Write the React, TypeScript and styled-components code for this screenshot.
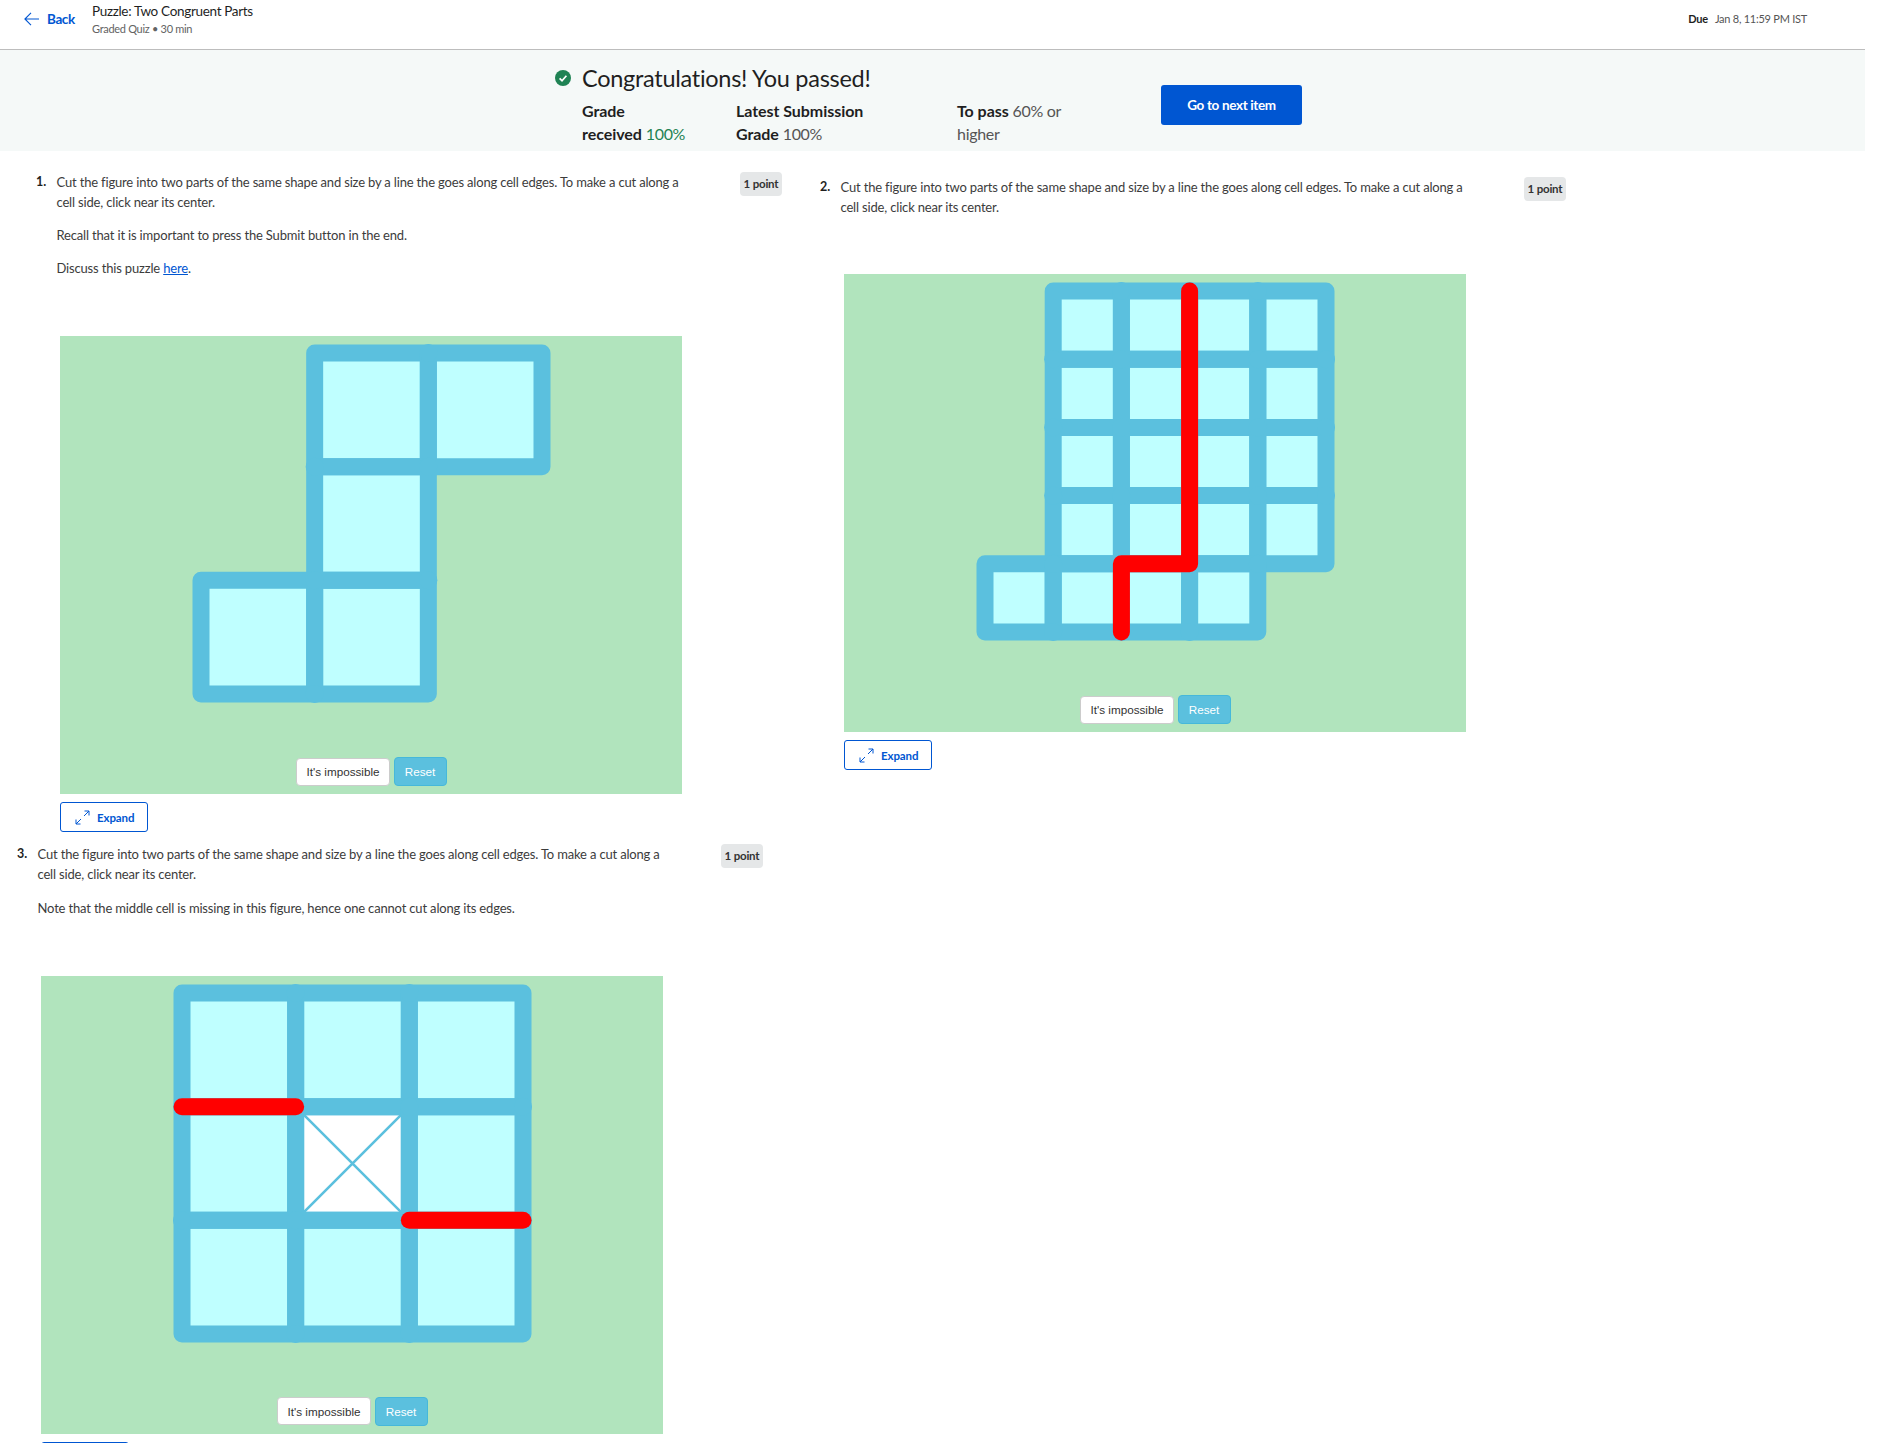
import styled, { createGlobalStyle } from "styled-components";

const GlobalStyle = createGlobalStyle`
  html, body {
    margin: 0;
    height: 1443px;
    overflow: hidden;
    background: #fff;
  }
  body {
    font-family: Lato, "Open Sans", sans-serif;
    color: #1f1f1f;
  }
`;

const Page = styled.div`
  width: 1865px;
`;

const Header = styled.header`
  display: flex;
  height: 49px;
  border-bottom: 1px solid #bdbdbd;
  box-sizing: content-box;
`;

const BackLink = styled.a`
  display: flex;
  align-items: center;
  gap: 8px;
  height: 38px;
  margin-left: 24px;
  width: 68px;
  flex: none;
  color: #0056d2;
  font-size: 13.5px;
  font-weight: 700;
  letter-spacing: -0.4px;
`;

const TitleBlock = styled.div`
  flex: 1;
  padding-top: 2px;
`;

const Title = styled.div`
  font-size: 13.5px;
  line-height: 18px;
  letter-spacing: -0.32px;
  color: #1f1f1f;
`;

const SubTitle = styled.div`
  font-size: 11px;
  line-height: 18px;
  letter-spacing: -0.3px;
  color: #636363;
`;

const DueText = styled.div`
  margin: 10px 58px 0 0;
  font-size: 11px;
  line-height: 18px;
  letter-spacing: -0.25px;
  color: #555;
  b {
    color: #1f1f1f;
    margin-right: 7px;
  }
`;

const Banner = styled.section`
  display: flex;
  align-items: flex-start;
  height: 101px;
  padding-left: 555px;
  background: #f5f9f8;
`;

const BannerBody = styled.div`
  width: 606px;
  flex: none;
  padding-top: 13px;
`;

const Heading = styled.div`
  display: flex;
  align-items: center;
  gap: 11px;
  height: 30px;
  margin-bottom: 6px;
  font-size: 23.5px;
  letter-spacing: -0.28px;
`;

const Stats = styled.div`
  display: grid;
  grid-template-columns: 154px 221px 130px;
  margin-left: 27px;
  font-size: 16px;
  line-height: 23px;
  letter-spacing: -0.3px;
  color: #555;
  b {
    font-weight: 700;
    letter-spacing: -0.05px;
    color: #1f1f1f;
  }
`;

const GreenValue = styled.span`
  color: #1f8354;
`;

const NextButton = styled.button`
  width: 141px;
  height: 40px;
  margin-top: 35px;
  border: none;
  border-radius: 3px;
  background: #0056d2;
  color: #fff;
  font-family: inherit;
  font-size: 13.5px;
  font-weight: 700;
  letter-spacing: -0.35px;
`;

const Row = styled.div<{ $top: number }>`
  display: flex;
  align-items: flex-start;
  padding-top: ${(p) => p.$top}px;
`;

const Question = styled.article<{ $left: number; $top?: number }>`
  display: flex;
  align-items: flex-start;
  flex: none;
  margin-left: ${(p) => p.$left}px;
  margin-top: ${(p) => p.$top ?? 0}px;
`;

const QuestionNumber = styled.div`
  width: 20.5px;
  flex: none;
  font-size: 12.5px;
  font-weight: 700;
  line-height: 20px;
`;

const QuestionBody = styled.div`
  width: 683.5px;
  flex: none;
`;

const Para = styled.p`
  margin: 0 0 13px;
  font-size: 13px;
  line-height: 20px;
  letter-spacing: -0.17px;
  color: #3c3c3c;
  a {
    color: #0056d2;
    text-decoration: underline;
  }
`;

const NotePara = styled(Para)`
  margin-top: 14px;
`;

const PointBadge = styled.div`
  width: 42px;
  height: 24px;
  flex: none;
  border-radius: 4px;
  background: #e5e7e8;
  font-size: 11.5px;
  font-weight: 700;
  line-height: 24px;
  letter-spacing: -0.2px;
  text-align: center;
  color: #333;
`;

const PuzzleBox = styled.div<{ $gap: number }>`
  display: flex;
  flex-direction: column;
  align-items: center;
  width: 622px;
  height: 458px;
  margin: ${(p) => p.$gap}px 0 0 3.5px;
  background: #b1e4bd;
`;

const PuzzleSvg = styled.svg`
  display: block;
  flex: none;
`;

const PuzzleActions = styled.div`
  display: flex;
  align-items: center;
  gap: 4px;
  margin-top: auto;
  padding-bottom: 8px;
`;

const ImpossibleButton = styled.button`
  width: 94px;
  height: 28px;
  padding: 0 0 0 1px;
  border: 1px solid #ccc;
  border-radius: 4px;
  background: #fff;
  color: #333;
  font-family: "Liberation Sans", Arial, sans-serif;
  font-size: 11.7px;
`;

const ResetButton = styled.button`
  width: 53px;
  height: 29px;
  padding: 0;
  border: 1px solid #46b8da;
  border-radius: 4px;
  background: #5bc0de;
  color: #fff;
  font-family: "Liberation Sans", Arial, sans-serif;
  font-size: 11.7px;
`;

const ExpandButton = styled.button`
  display: flex;
  align-items: center;
  gap: 7px;
  width: 88px;
  height: 30px;
  margin: 8px 0 0 3.5px;
  padding: 0 0 0 14px;
  border: 1px solid #0056d2;
  border-radius: 3px;
  background: #fff;
  color: #0056d2;
  font-family: inherit;
  font-size: 11.5px;
  font-weight: 700;
  letter-spacing: -0.1px;
`;

const STROKE = "#5bc0de";

type Cell = [number, number];
type Point = [number, number];

type FigureProps = {
  size: number;
  cells: Cell[];
  cuts: Point[][];
  hole?: Cell;
};

// grid lines sit at 141..482 across and 17..358 down, a cut is a polyline in grid units
const Figure = ({ size, cells, cuts, hole }: FigureProps) => {
  const step = 341 / size;
  const px = (c: number) => 141 + c * step;
  const py = (r: number) => 17 + r * step;

  // the original draws every edge with a round cap, so shared corners stick out a little
  const corners = new Map<string, number>();
  cells.forEach(([c, r]) => {
    [[c, r], [c + 1, r], [c, r + 1], [c + 1, r + 1]].forEach(([x, y]) => {
      const key = `${x},${y}`;
      corners.set(key, (corners.get(key) ?? 0) + 1);
    });
  });
  const joints = [...corners.entries()]
    .filter(([, count]) => count > 1)
    .map(([key]) => key.split(",").map(Number));

  return (
    <PuzzleSvg width="622" height="380" viewBox="0 0 622 380">
      {cells.map(([c, r]) => (
        <rect
          key={`f${c}-${r}`}
          x={px(c)}
          y={py(r)}
          width={step}
          height={step}
          fill={hole && hole[0] === c && hole[1] === r ? "#fff" : "#bfffff"}
        />
      ))}
      {hole && (
        <path
          d={`M${px(hole[0])} ${py(hole[1])}l${step} ${step}M${px(hole[0] + 1)} ${py(hole[1])}l${-step} ${step}`}
          stroke={STROKE}
          strokeWidth="2.6"
        />
      )}
      {cells.map(([c, r]) => (
        <rect
          key={`e${c}-${r}`}
          x={px(c)}
          y={py(r)}
          width={step}
          height={step}
          fill="none"
          stroke={STROKE}
          strokeWidth="17"
          strokeLinejoin="round"
        />
      ))}
      {joints.map(([c, r]) => (
        <circle key={`j${c}-${r}`} cx={px(c)} cy={py(r)} r="9" fill={STROKE} />
      ))}
      {cuts.map((cut, i) => (
        <polyline
          key={i}
          points={cut.map(([c, r]) => `${px(c)},${py(r)}`).join(" ")}
          fill="none"
          stroke="#f00"
          strokeWidth="17"
          strokeLinecap="round"
          strokeLinejoin="round"
        />
      ))}
    </PuzzleSvg>
  );
};

const Puzzle = ({ gap, ...props }: FigureProps & { gap: number }) => (
  <>
    <PuzzleBox $gap={gap}>
      <Figure {...props} />
      <PuzzleActions>
        <ImpossibleButton>It's impossible</ImpossibleButton>
        <ResetButton>Reset</ResetButton>
      </PuzzleActions>
    </PuzzleBox>
    <ExpandButton>
      <svg width="15" height="15" viewBox="0 0 15 15" fill="none" stroke="#0056d2" strokeWidth="1">
        <path d="M9 6l5-5M9.5 1H14v4.5M6 9l-5 5M1 9.5V14h4.5" />
      </svg>
      Expand
    </ExpandButton>
  </>
);

const Intro = () => (
  <Para>
    Cut the figure into two parts of the same shape and size by a line the goes along cell edges. To make a cut along a
    <br />
    cell side, click near its center.
  </Para>
);

const q2Cells: Cell[] = [];
for (let r = 0; r < 4; r++) for (let c = 1; c < 5; c++) q2Cells.push([c, r]);
for (let c = 0; c < 4; c++) q2Cells.push([c, 4]);

const q3Cells: Cell[] = [];
for (let r = 0; r < 3; r++) for (let c = 0; c < 3; c++) q3Cells.push([c, r]);

export default function App() {
  return (
    <Page>
      <GlobalStyle />
      <Header>
        <BackLink>
          <svg width="15" height="14" viewBox="0 0 15 14" fill="none" stroke="#0056d2" strokeWidth="1.1">
            <path d="M15 7H1M7 .8L.9 7 7 13.2" />
          </svg>
          Back
        </BackLink>
        <TitleBlock>
          <Title>Puzzle: Two Congruent Parts</Title>
          <SubTitle>Graded Quiz • 30 min</SubTitle>
        </TitleBlock>
        <DueText>
          <b>Due</b>Jan 8, 11:59 PM IST
        </DueText>
      </Header>

      <Banner>
        <BannerBody>
          <Heading>
            <svg width="16" height="16" viewBox="0 0 16 16">
              <circle cx="8" cy="8" r="8" fill="#1f8354" />
              <path d="M4.6 8.3l2.4 2.4 4.4-5" fill="none" stroke="#fff" strokeWidth="1.7" />
            </svg>
            Congratulations! You passed!
          </Heading>
          <Stats>
            <div>
              <b>Grade</b>
              <br />
              <b>received</b> <GreenValue>100%</GreenValue>
            </div>
            <div>
              <b>Latest Submission</b>
              <br />
              <b>Grade</b> 100%
            </div>
            <div>
              <b>To pass</b> 60% or
              <br />
              higher
            </div>
          </Stats>
        </BannerBody>
        <NextButton>Go to next item</NextButton>
      </Banner>

      <Row $top={21}>
        <Question $left={36}>
          <QuestionNumber>1.</QuestionNumber>
          <QuestionBody>
            <Intro />
            <Para>Recall that it is important to press the Submit button in the end.</Para>
            <Para>
              Discuss this puzzle <a>here</a>.
            </Para>
            <Puzzle
              gap={58}
              size={3}
              cells={[[1, 0], [2, 0], [1, 1], [0, 2], [1, 2]]}
              cuts={[]}
            />
          </QuestionBody>
          <PointBadge>1 point</PointBadge>
        </Question>
        <Question $left={38} $top={5}>
          <QuestionNumber>2.</QuestionNumber>
          <QuestionBody>
            <Intro />
            <Puzzle gap={57} size={5} cells={q2Cells} cuts={[[[3, 0], [3, 4], [2, 4], [2, 5]]]} />
          </QuestionBody>
          <PointBadge>1 point</PointBadge>
        </Question>
      </Row>

      <Row $top={12}>
        <Question $left={17}>
          <QuestionNumber>3.</QuestionNumber>
          <QuestionBody>
            <Intro />
            <NotePara>Note that the middle cell is missing in this figure, hence one cannot cut along its edges.</NotePara>
            <Puzzle
              gap={57.5}
              size={3}
              cells={q3Cells}
              hole={[1, 1]}
              cuts={[[[0, 1], [1, 1]], [[2, 2], [3, 2]]]}
            />
          </QuestionBody>
          <PointBadge>1 point</PointBadge>
        </Question>
      </Row>
    </Page>
  );
}
